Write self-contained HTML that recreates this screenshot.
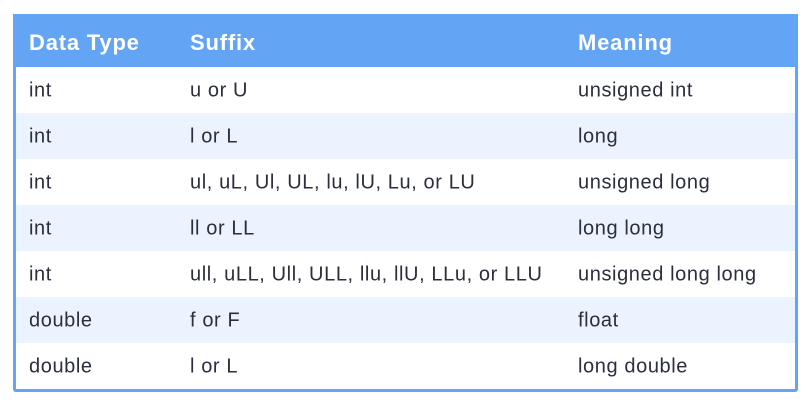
<!DOCTYPE html>
<html><head><style>
body{margin:0;background:#fff;width:806px;height:410px;overflow:hidden;font-family:"Liberation Sans",sans-serif}
.t{position:absolute;left:13px;top:14px;width:779px;border:3px solid #64a4f5;border-top:0;background:#fff;border-radius:0 0 3px 3px}
.h{height:53px;background:#64a4f5;color:#fff;font-weight:bold;font-size:22px;letter-spacing:0.8px;position:relative}
.r{height:46px;position:relative;color:#2b2e3d;font-size:20px;letter-spacing:0.6px}
.r:nth-child(odd){background:#ebf3fe}
.c{position:absolute;top:calc(50% + 1px);transform:translateY(-50%);white-space:nowrap}
.a{left:13px}.b{left:174px}.d{left:562px}
.h .c{top:29px}
</style></head><body>
<div class="t">
<div class="h"><span class="c a">Data Type</span><span class="c b">Suffix</span><span class="c d">Meaning</span></div>
<div class="r"><span class="c a">int</span><span class="c b">u or U</span><span class="c d">unsigned int</span></div>
<div class="r"><span class="c a">int</span><span class="c b">l or L</span><span class="c d">long</span></div>
<div class="r"><span class="c a">int</span><span class="c b">ul, uL, Ul, UL, lu, lU, Lu, or LU</span><span class="c d">unsigned long</span></div>
<div class="r"><span class="c a">int</span><span class="c b">ll or LL</span><span class="c d">long long</span></div>
<div class="r"><span class="c a">int</span><span class="c b">ull, uLL, Ull, ULL, llu, llU, LLu, or LLU</span><span class="c d">unsigned long long</span></div>
<div class="r"><span class="c a">double</span><span class="c b">f or F</span><span class="c d">float</span></div>
<div class="r"><span class="c a">double</span><span class="c b">l or L</span><span class="c d">long double</span></div>
</div>
</body></html>
